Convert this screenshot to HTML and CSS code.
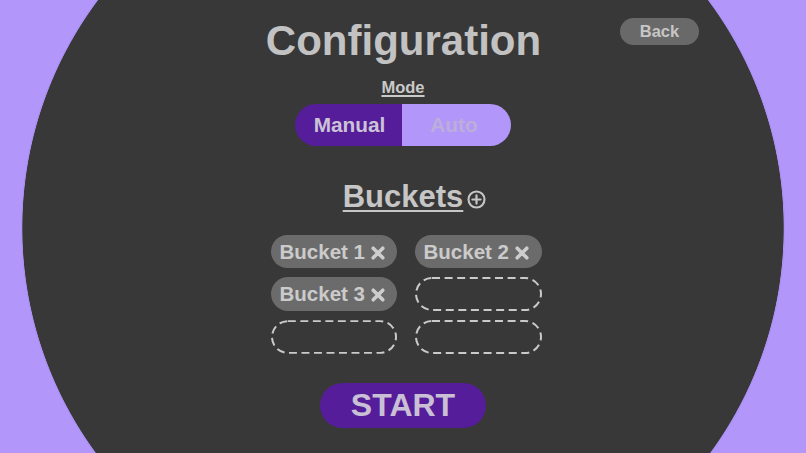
FILE: index.html
```html
<!DOCTYPE html>
<html lang="en">
<head>
<meta charset="utf-8">
<title>Configuration</title>
<link rel="stylesheet" href="styles.css">
</head>
<body>
<main class="screen">
  <header class="header">
    <h1 class="title">Configuration</h1>
    <button class="back-btn">Back</button>
  </header>

  <div class="mode-label">Mode</div>
  <div class="toggle">
    <span class="toggle-opt active">Manual</span>
    <span class="toggle-opt">Auto</span>
  </div>

  <h2 class="buckets-title">Buckets<svg class="add-icon" viewBox="0 0 19 19" width="19" height="19" aria-hidden="true"><circle cx="9.5" cy="9.5" r="8" fill="none" stroke="#c6c6c6" stroke-width="2.1"/><path d="M9.5 5.4v8.2M5.4 9.5h8.2" stroke="#c6c6c6" stroke-width="2.2" stroke-linecap="round"/></svg></h2>

  <div class="bucket-grid">
    <div class="chip">Bucket 1<svg class="x-icon" viewBox="0 0 16 16" width="16" height="16" aria-hidden="true"><path d="M3.2 3.2L12.8 12.8M12.8 3.2L3.2 12.8" stroke="#cdcdcd" stroke-width="3.6" stroke-linecap="round"/></svg></div>
    <div class="chip">Bucket 2<svg class="x-icon" viewBox="0 0 16 16" width="16" height="16" aria-hidden="true"><path d="M3.2 3.2L12.8 12.8M12.8 3.2L3.2 12.8" stroke="#cdcdcd" stroke-width="3.6" stroke-linecap="round"/></svg></div>
    <div class="chip">Bucket 3<svg class="x-icon" viewBox="0 0 16 16" width="16" height="16" aria-hidden="true"><path d="M3.2 3.2L12.8 12.8M12.8 3.2L3.2 12.8" stroke="#cdcdcd" stroke-width="3.6" stroke-linecap="round"/></svg></div>
    <div class="slot"><svg class="slot-outline" viewBox="0 0 127 34" width="127" height="34" aria-hidden="true"><rect x="1" y="1" width="125" height="32" rx="16" fill="none" stroke="#cacaca" stroke-width="2" stroke-dasharray="8 4.6"/></svg></div>
    <div class="slot"><svg class="slot-outline" viewBox="0 0 127 34" width="127" height="34" aria-hidden="true"><rect x="1" y="1" width="125" height="32" rx="16" fill="none" stroke="#cacaca" stroke-width="2" stroke-dasharray="8 4.6"/></svg></div>
    <div class="slot"><svg class="slot-outline" viewBox="0 0 127 34" width="127" height="34" aria-hidden="true"><rect x="1" y="1" width="125" height="32" rx="16" fill="none" stroke="#cacaca" stroke-width="2" stroke-dasharray="8 4.6"/></svg></div>
  </div>

  <button class="start-btn">START</button>
</main>
</body>
</html>
```

FILE: styles.css
```css
* {
  box-sizing: border-box;
}

html, body {
  margin: 0;
  padding: 0;
  width: 806px;
  height: 453px;
  overflow: hidden;
}

body {
  font-family: "Liberation Sans", Arial, sans-serif;
  font-weight: bold;
  color: #c4c4c4;
  background: radial-gradient(circle 381px at 403px 228px, #383838 380.3px, #a88ef0 381px, #b296f9 382.5px);
  background-color: #b296f9;
}

.screen {
  display: flex;
  flex-direction: column;
  align-items: center;
  width: 806px;
  height: 453px;
}

.header {
  display: grid;
  grid-template-columns: 1fr auto 1fr;
  width: 100%;
  padding-top: 18px;
}

.title {
  grid-column: 2;
  margin: 1.5px 0 0 1px;
  font-size: 42px;
  line-height: 42px;
  font-weight: bold;
  color: #c2c2c2;
}

.back-btn {
  grid-column: 3;
  justify-self: end;
  align-self: start;
  margin-right: 107px;
  width: 79px;
  height: 27px;
  padding: 0;
  border: none;
  border-radius: 14px;
  background: #696969;
  color: #c6c6c6;
  font-family: inherit;
  font-weight: bold;
  font-size: 16.5px;
  line-height: 27px;
}

.mode-label {
  margin-top: 17.5px;
  font-size: 16.5px;
  line-height: 16.5px;
  color: #c9c9c9;
  text-decoration: underline;
  text-decoration-thickness: 1.5px;
  text-underline-offset: 2px;
}

.toggle {
  display: flex;
  margin-top: 8.5px;
  height: 42px;
  border-radius: 21px;
  overflow: hidden;
}

.toggle-opt {
  display: flex;
  align-items: center;
  justify-content: center;
  width: 109px;
  height: 42px;
  padding-right: 5px;
  font-size: 20.8px;
  background: #b296f9;
  color: #bcaedb;
}

.toggle-opt.active {
  width: 107px;
  padding-right: 0;
  padding-left: 2px;
  background: #561d9b;
  color: #cbc3d6;
}

.buckets-title {
  position: relative;
  margin: 34.5px 0 0 0;
  font-size: 31px;
  line-height: 31px;
  font-weight: bold;
  color: #c6c6c6;
  text-decoration: underline;
  text-decoration-thickness: 2px;
  text-underline-offset: 3px;
}

.add-icon {
  position: absolute;
  left: calc(100% + 4px);
  top: 9.5px;
}

.bucket-grid {
  display: grid;
  grid-template-columns: 126px 127px;
  grid-template-rows: 33px 34px 34px;
  column-gap: 18px;
  row-gap: 9px;
  margin-top: 23.5px;
  padding-left: 6px;
}

.chip {
  display: flex;
  align-items: center;
  gap: 5px;
  padding-left: 9px;
  border-radius: 17px;
  background: #6b6b6b;
  color: #cbcbcb;
  font-size: 20.5px;
}

.x-icon {
  margin-top: 2px;
}

.slot {
  display: flex;
}

.slot-outline {
  display: block;
}

.start-btn {
  margin-top: 29px;
  width: 166px;
  height: 45px;
  padding: 0;
  border: none;
  border-radius: 23px;
  background: #561d9b;
  color: #c9c0d6;
  font-family: inherit;
  font-weight: bold;
  font-size: 32px;
  line-height: 45px;
}
```
